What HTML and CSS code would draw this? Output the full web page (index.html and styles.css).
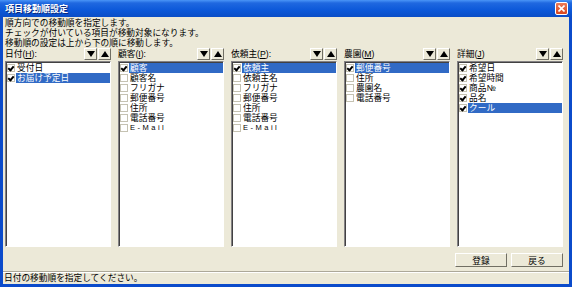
FILE: index.html
```html
<!DOCTYPE html>
<html lang="ja">
<head>
    <meta charset="UTF-8">
    <title>項目移動順設定</title>
    <link rel="stylesheet" href="styles.css">
</head>
<body>

<div class="window">

    <!-- Title Bar -->
    <div class="titlebar">
        <span class="title">項目移動順設定</span>
        <span class="close-btn">
            <svg width="7" height="7" viewBox="0 0 7 7"><path d="M0.5 0.5 L6.5 6.5 M6.5 0.5 L0.5 6.5" stroke="#fff" stroke-width="1.6"/></svg>
        </span>
    </div>

    <div class="frame">
        <div class="client">

            <!-- Description -->
            <div class="desc">
                <p>順方向での移動順を指定します。</p>
                <p>チェックが付いている項目が移動対象になります。</p>
                <p>移動順の設定は上から下の順に移動します。</p>
            </div>

            <!-- Columns -->
            <div class="columns">
                <div class="col">
                    <div class="col-head">
                        <span class="label">日付(<u>H</u>):</span>
                        <span class="arrows"><span class="arrow-btn down"></span><span class="arrow-btn up"></span></span>
                    </div>
                    <ul class="list">
                        <li><span class="chk on"></span><span class="item">受付日</span></li>
                        <li><span class="chk on"></span><span class="item selected">お届け予定日</span></li>
                    </ul>
                </div>

                <div class="col">
                    <div class="col-head">
                        <span class="label">顧客(<u>I</u>):</span>
                        <span class="arrows"><span class="arrow-btn down"></span><span class="arrow-btn up"></span></span>
                    </div>
                    <ul class="list">
                        <li><span class="chk on"></span><span class="item selected">顧客</span></li>
                        <li><span class="chk"></span><span class="item">顧客名</span></li>
                        <li><span class="chk"></span><span class="item">フリガナ</span></li>
                        <li><span class="chk"></span><span class="item">郵便番号</span></li>
                        <li><span class="chk"></span><span class="item">住所</span></li>
                        <li><span class="chk"></span><span class="item">電話番号</span></li>
                        <li><span class="chk"></span><span class="item latin">E-Mail</span></li>
                    </ul>
                </div>

                <div class="col">
                    <div class="col-head">
                        <span class="label">依頼主(<u>P</u>):</span>
                        <span class="arrows"><span class="arrow-btn down"></span><span class="arrow-btn up"></span></span>
                    </div>
                    <ul class="list">
                        <li><span class="chk on"></span><span class="item selected">依頼主</span></li>
                        <li><span class="chk"></span><span class="item">依頼主名</span></li>
                        <li><span class="chk"></span><span class="item">フリガナ</span></li>
                        <li><span class="chk"></span><span class="item">郵便番号</span></li>
                        <li><span class="chk"></span><span class="item">住所</span></li>
                        <li><span class="chk"></span><span class="item">電話番号</span></li>
                        <li><span class="chk"></span><span class="item latin">E-Mail</span></li>
                    </ul>
                </div>

                <div class="col">
                    <div class="col-head">
                        <span class="label">農園(<u>M</u>)</span>
                        <span class="arrows"><span class="arrow-btn down"></span><span class="arrow-btn up"></span></span>
                    </div>
                    <ul class="list">
                        <li><span class="chk on"></span><span class="item selected">郵便番号</span></li>
                        <li><span class="chk"></span><span class="item">住所</span></li>
                        <li><span class="chk"></span><span class="item">農園名</span></li>
                        <li><span class="chk"></span><span class="item">電話番号</span></li>
                    </ul>
                </div>

                <div class="col">
                    <div class="col-head">
                        <span class="label">詳細(<u>J</u>)</span>
                        <span class="arrows"><span class="arrow-btn down"></span><span class="arrow-btn up"></span></span>
                    </div>
                    <ul class="list">
                        <li><span class="chk on"></span><span class="item">希望日</span></li>
                        <li><span class="chk on"></span><span class="item">希望時間</span></li>
                        <li><span class="chk on"></span><span class="item">商品№</span></li>
                        <li><span class="chk on"></span><span class="item">品名</span></li>
                        <li><span class="chk on"></span><span class="item selected">クール</span></li>
                    </ul>
                </div>
            </div>

            <!-- Buttons -->
            <div class="actions">
                <span class="btn">登録</span>
                <span class="btn">戻る</span>
            </div>
        </div>

        <!-- Status Bar -->
        <div class="statusbar">日付の移動順を指定してください。</div>
    </div>
</div>

</body>
</html>
```

FILE: styles.css
```css
/* Basic Reset */
* {
    margin: 0;
    padding: 0;
    box-sizing: border-box;
}

body {
    font-family: "Liberation Sans", "Noto Sans CJK JP", sans-serif;
    font-size: 8.7px;
    color: #000;
    background-color: #ece9d8;
}

.window {
    width: 572px;
    height: 287px;
    display: flex;
    flex-direction: column;
    background-color: #ece9d8;
}

/* Title Bar */
.titlebar {
    height: 17px;
    display: flex;
    align-items: center;
    justify-content: space-between;
    padding: 0 4px 0 5px;
    background: linear-gradient(#4a95f7 0, #1f68e0 3px, #0c58d9 60%, #0a4dc6 100%);
}

.title {
    color: #fff;
    font-weight: bold;
    font-size: 9px;
    text-shadow: 1px 1px 0 #0a2a80;
}

.close-btn {
    width: 13px;
    height: 13px;
    display: flex;
    align-items: center;
    justify-content: center;
    background: linear-gradient(#ec7a58, #d8461e);
    border: 1px solid #fff;
    border-radius: 2px;
}

.frame {
    flex: 1;
    display: flex;
    flex-direction: column;
    border-left: 3px solid #0b4bcb;
    border-right: 3px solid #0b4bcb;
    border-bottom: 3px solid #0b4bcb;
}

.client {
    padding: 0 6px 0 2px;
}

/* Description */
.desc {
    height: 30px;
    padding-top: 1px;
}

.desc p {
    line-height: 10px;
    height: 10px;
    white-space: nowrap;
}

/* Columns */
.columns {
    display: grid;
    grid-template-columns: repeat(5, 1fr);
    gap: 7px;
}

.col-head {
    height: 14px;
    display: flex;
    align-items: center;
    justify-content: space-between;
}

.label {
    line-height: 12px;
}

.arrows {
    display: flex;
    gap: 1px;
}

.arrow-btn {
    width: 13px;
    height: 12px;
    display: flex;
    align-items: center;
    justify-content: center;
    background-color: #ece9d8;
    border: 1px solid;
    border-color: #fff #716f64 #716f64 #fff;
}

.arrow-btn::before {
    content: "";
    border-left: 4px solid transparent;
    border-right: 4px solid transparent;
}

.arrow-btn.down::before {
    border-top: 6px solid #000;
}

.arrow-btn.up::before {
    border-bottom: 6px solid #000;
}

.list {
    list-style: none;
    height: 186px;
    background-color: #fff;
    border: 1px solid;
    border-color: #848284 #fff #fff #848284;
    box-shadow: inset 1px 1px 0 #424142;
    padding: 1px 0 0 1px;
}

.list li {
    height: 10px;
    display: flex;
    align-items: center;
}

.chk {
    width: 8px;
    height: 8px;
    margin-right: 1px;
    border: 1px solid #c5c2b2;
    background-color: #fff;
    position: relative;
}

.chk.on::after {
    content: "";
    position: absolute;
    left: 1px;
    top: 0;
    width: 2px;
    height: 4px;
    border: solid #000;
    border-width: 0 2px 2px 0;
    transform: rotate(40deg);
}

.item {
    flex: 1;
    height: 10px;
    line-height: 10px;
    padding-left: 1px;
    white-space: nowrap;
}

.item.latin {
    letter-spacing: 2.5px;
    font-size: 7.5px;
}

.item.selected {
    background-color: #316ac5;
    color: #fff;
}

/* Buttons */
.actions {
    display: flex;
    justify-content: flex-end;
    gap: 4px;
    margin-top: 6px;
    height: 14px;
}

.btn {
    width: 52px;
    height: 14px;
    display: flex;
    align-items: center;
    justify-content: center;
    background-color: #ece9d8;
    border: 1px solid;
    border-color: #fff #716f64 #716f64 #fff;
}

/* Status Bar */
.statusbar {
    margin-top: 5px;
    height: 12px;
    line-height: 11px;
    padding-left: 1px;
    border-top: 1px solid #fff;
    box-shadow: 0 -1px 0 #aca899;
}
```
